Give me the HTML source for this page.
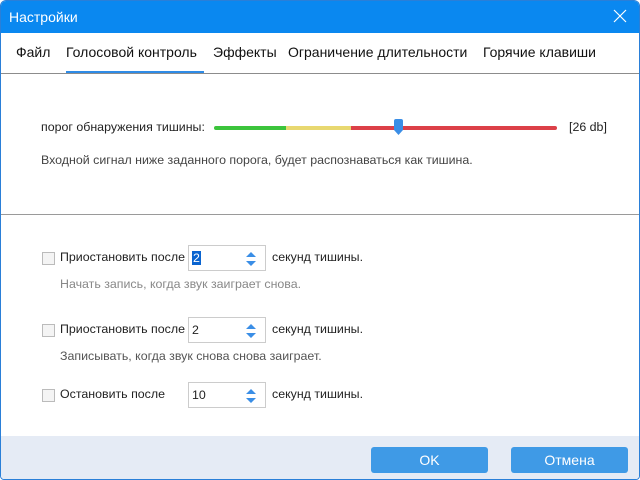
<!DOCTYPE html>
<html><head><meta charset="utf-8"><style>
*{margin:0;padding:0;box-sizing:border-box}
body{width:640px;height:480px;overflow:hidden;background:#fff;font-family:"Liberation Sans",sans-serif;font-size:12.4px;color:#222;position:relative}
.win{position:absolute;left:0;top:0;width:640px;height:480px;border:1px solid #2a7fd8;border-radius:6px 6px 4px 4px;overflow:hidden;background:#fff}
.title{position:absolute;left:0;top:0;width:640px;height:32px;background:#0a88f0;color:#fff;font-size:14px;line-height:32px;padding-left:8px}
.x{position:absolute;right:14px;top:8px}
.tabs{position:absolute;top:43px;left:0;font-size:14px;color:#111}
.tabs span{position:absolute;white-space:nowrap;top:0}
.ul{position:absolute;left:65px;top:70px;width:138px;height:3px;background:#2e8be6}
.hl{position:absolute;left:0;width:640px;height:1px;background:#9a9a9a}
.t{position:absolute;white-space:nowrap}
.g{color:#888}
.cb{position:absolute;width:13px;height:13px;border:1px solid #bbb;background:#f4f4f4}
.sp{position:absolute;width:78px;height:26px;border:1px solid #ccc;background:#fff}
.sp span{position:absolute;left:3px;top:5px}
.sp svg{position:absolute;right:8px;top:5px}
.foot{position:absolute;left:0;top:435px;width:640px;height:45px;background:#e5ebf5}
.btn{position:absolute;top:446px;width:117px;height:26px;background:#3f9ae6;border-radius:3px;color:#fff;font-size:14px;text-align:center;line-height:26px}
</style></head><body><div class="win">
<div class="title">Настройки
<svg class="x" width="14" height="14"><path d="M1 1L13 13M13 1L1 13" stroke="#fff" stroke-width="1.2"/></svg></div>
<div class="tabs">
<span style="left:15px">Файл</span>
<span style="left:65px">Голосовой контроль</span>
<span style="left:212px">Эффекты</span>
<span style="left:287px">Ограничение длительности</span>
<span style="left:482px">Горячие клавиши</span>
</div>
<div class="ul"></div>
<div class="hl" style="top:72px;background:#8c8c8c"></div>
<div class="t" style="left:40px;top:119px">порог обнаружения тишины:</div>
<div style="position:absolute;left:213px;top:125px;width:72px;height:4px;background:#3cc43c;border-radius:2px 0 0 2px"></div>
<div style="position:absolute;left:285px;top:125px;width:65px;height:4px;background:#e8d870"></div>
<div style="position:absolute;left:350px;top:125px;width:206px;height:4px;background:#dc4048;border-radius:0 2px 2px 0"></div>
<svg style="position:absolute;left:392px;top:118px" width="11" height="17"><path d="M1 2Q1 0 3 0H8Q10 0 10 2V11L5.5 16L1 11Z" fill="#3a8ee6"/></svg>
<div class="t" style="left:568px;top:119px">[26 db]</div>
<div class="t" style="left:40px;top:152px;color:#444">Входной сигнал ниже заданного порога, будет распознаваться как тишина.</div>
<div class="hl" style="top:213px"></div>
<div class="cb" style="left:41px;top:251px"></div>
<div class="t" style="left:59px;top:249px">Приостановить после</div>
<div class="sp" style="left:187px;top:244px"><span style="background:#0a64d0;color:#fff;padding:0 1px">2</span><svg width="12" height="16"><path d="M1 6L6 1L11 6Z M1 10L6 15L11 10Z" fill="#3a8ee6"/></svg></div>
<div class="t" style="left:271px;top:249px">секунд тишины.</div>
<div class="t g" style="left:59px;top:276px">Начать запись, когда звук заиграет снова.</div>
<div class="cb" style="left:41px;top:323px"></div>
<div class="t" style="left:59px;top:321px">Приостановить после</div>
<div class="sp" style="left:187px;top:316px"><span>2</span><svg width="12" height="16"><path d="M1 6L6 1L11 6Z M1 10L6 15L11 10Z" fill="#3a8ee6"/></svg></div>
<div class="t" style="left:271px;top:321px">секунд тишины.</div>
<div class="t" style="left:59px;top:348px;color:#555">Записывать, когда звук снова снова заиграет.</div>
<div class="cb" style="left:41px;top:388px"></div>
<div class="t" style="left:59px;top:386px">Остановить после</div>
<div class="sp" style="left:187px;top:381px"><span>10</span><svg width="12" height="16"><path d="M1 6L6 1L11 6Z M1 10L6 15L11 10Z" fill="#3a8ee6"/></svg></div>
<div class="t" style="left:271px;top:386px">секунд тишины.</div>
<div class="foot"></div>
<div class="btn" style="left:370px">OK</div>
<div class="btn" style="left:510px">Отмена</div>
</div></body></html>
